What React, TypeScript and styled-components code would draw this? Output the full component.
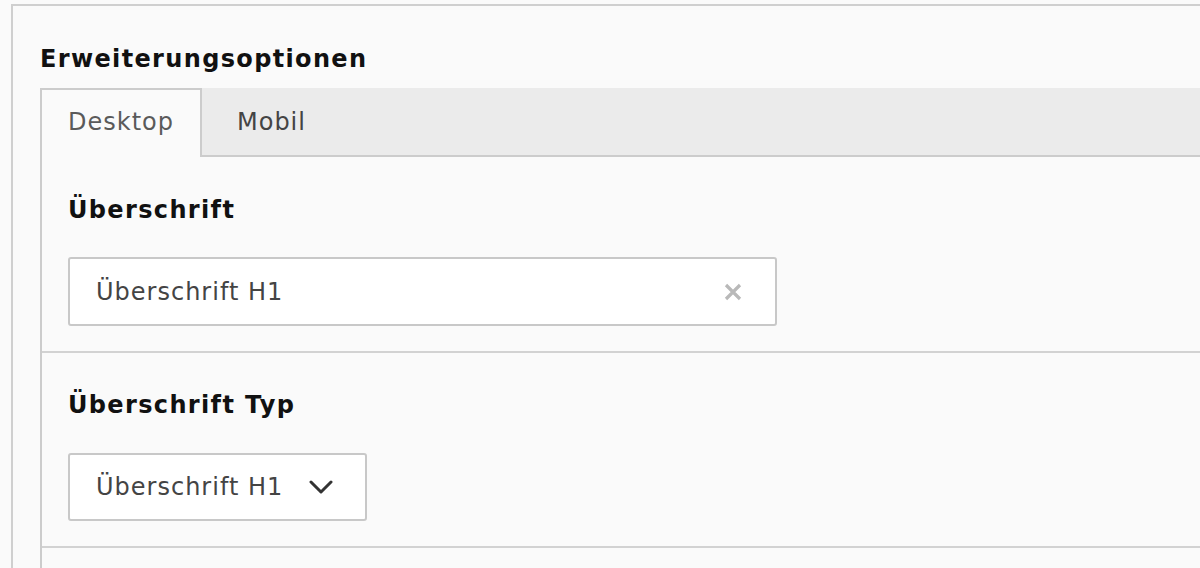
import React from "react";
import styled, { createGlobalStyle } from "styled-components";

const Global = createGlobalStyle`
  html, body {
    margin: 0;
    padding: 0;
    background: #fafafa;
    font-family: "DejaVu Sans", Verdana, sans-serif;
  }
  * { box-sizing: border-box; }
`;

const Page = styled.div`
  padding: 4px 0 0 11px;
  height: 568px;
  overflow: hidden;
`;

const Panel = styled.div`
  border-top: 2px solid #cfcfcf;
  border-left: 2px solid #cfcfcf;
  padding: 39px 0 0 27px;
  min-height: 600px;
`;

const Heading = styled.h4`
  margin: 0 0 15px;
  font-size: 24px;
  line-height: 28px;
  font-weight: bold;
  letter-spacing: 1.35px;
  color: #111;
`;

const TabList = styled.div`
  display: flex;
  gap: 7px;
  background: #ebebeb;
  border-bottom: 2px solid #cccccc;
`;

const Tab = styled.div<{ $active?: boolean }>`
  padding: 18px 26px 21px;
  margin-bottom: -2px;
  font-size: 24px;
  line-height: 28px;
  letter-spacing: 1px;
  color: ${(p) => (p.$active ? "#5a5a5a" : "#444")};
  background: ${(p) => (p.$active ? "#fafafa" : "transparent")};
  border: 2px solid ${(p) => (p.$active ? "#cccccc" : "transparent")};
  border-bottom: none;
  padding-bottom: ${(p) => (p.$active ? "21px" : "19px")};
`;

const TabContent = styled.div`
  border-left: 2px solid #cccccc;
  background: #fafafa;
  min-height: 500px;
`;

const Section = styled.div<{ $top: number }>`
  padding: ${(p) => p.$top}px 0 25px 26px;
  border-bottom: 2px solid #d2d2d2;
`;

const Label = styled.div<{ $gap: number }>`
  font-size: 24px;
  line-height: 28px;
  font-weight: bold;
  letter-spacing: 1.35px;
  color: #111;
  margin-bottom: ${(p) => p.$gap}px;
`;

const Field = styled.div<{ $width: number; $height: number }>`
  display: flex;
  align-items: center;
  justify-content: space-between;
  width: ${(p) => p.$width}px;
  height: ${(p) => p.$height}px;
  padding: 0 32px 0 26px;
  background: #fff;
  border: 2px solid #c8c8c8;
  border-radius: 3px;
`;

const Value = styled.span`
  font-size: 24px;
  line-height: 28px;
  letter-spacing: 1px;
  color: #444;
  white-space: nowrap;
`;

const Icon = styled.svg`
  flex: none;
  display: block;
`;

export default function App() {
  return (
    <>
      <Global />
      <Page>
        <Panel>
          <Heading>Erweiterungsoptionen</Heading>
          <TabList>
            <Tab $active>Desktop</Tab>
            <Tab>Mobil</Tab>
          </TabList>
          <TabContent>
            <Section $top={39}>
              <Label $gap={33}>Überschrift</Label>
              <Field $width={709} $height={69}>
                <Value>Überschrift H1</Value>
                <Icon width="20" height="20" viewBox="0 0 20 20">
                  <path d="M3 3 L17 17 M17 3 L3 17" stroke="#b9b9b9" strokeWidth="3.2" strokeLinecap="butt" fill="none" />
                </Icon>
              </Field>
            </Section>
            <Section $top={38}>
              <Label $gap={34}>Überschrift Typ</Label>
              <Field $width={299} $height={68}>
                <Value>Überschrift H1</Value>
                <Icon width="24" height="16" viewBox="0 0 24 16">
                  <path d="M2 3 L12 13 L22 3" stroke="#333" strokeWidth="3" strokeLinecap="round" strokeLinejoin="round" fill="none" />
                </Icon>
              </Field>
            </Section>
          </TabContent>
        </Panel>
      </Page>
    </>
  );
}
